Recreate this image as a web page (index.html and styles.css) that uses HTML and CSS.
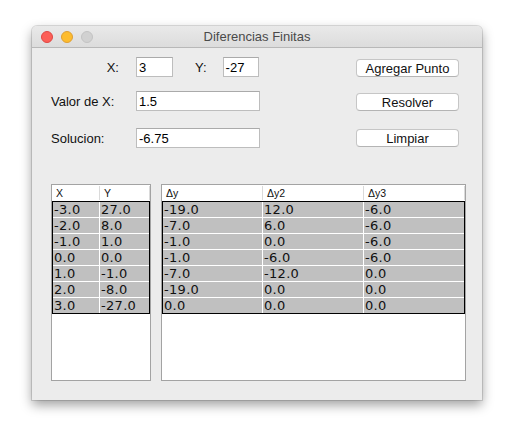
FILE: index.html
```html
<!DOCTYPE html>
<html>
<head>
<meta charset="utf-8">
<link rel="stylesheet" href="styles.css">
</head>
<body>
<div class="window">
  <div class="titlebar">
    <div class="lights">
      <span class="light red"></span>
      <span class="light yellow"></span>
      <span class="light gray"></span>
    </div>
    <div class="title">Diferencias Finitas</div>
    <div></div>
  </div>
  <div class="content">
    <div class="form">
      <div class="lbl lbl-x">X:</div>
      <div class="pair">
        <div class="field f-x">3</div>
        <span class="lbl-y">Y:</span>
        <div class="field f-y">-27</div>
      </div>
      <div class="btn">Agregar Punto</div>

      <div class="lbl">Valor de X:</div>
      <div class="pair"><div class="field f-wide">1.5</div></div>
      <div class="btn">Resolver</div>

      <div class="lbl">Solucion:</div>
      <div class="pair"><div class="field f-wide">-6.75</div></div>
      <div class="btn btn-last">Limpiar</div>
    </div>

    <div class="tables">
      <div class="table t-left">
        <div class="thead cols2">
          <div class="th">X</div><div class="th">Y</div>
        </div>
        <div class="tbody">
          <div class="td">-3.0</div><div class="td">27.0</div>
          <div class="td">-2.0</div><div class="td">8.0</div>
          <div class="td">-1.0</div><div class="td">1.0</div>
          <div class="td">0.0</div><div class="td">0.0</div>
          <div class="td">1.0</div><div class="td">-1.0</div>
          <div class="td">2.0</div><div class="td">-8.0</div>
          <div class="td">3.0</div><div class="td">-27.0</div>
        </div>
      </div>
      <div class="table t-right">
        <div class="thead cols3">
          <div class="th">Δy</div><div class="th">Δy2</div><div class="th">Δy3</div>
        </div>
        <div class="tbody">
          <div class="td">-19.0</div><div class="td">12.0</div><div class="td">-6.0</div>
          <div class="td">-7.0</div><div class="td">6.0</div><div class="td">-6.0</div>
          <div class="td">-1.0</div><div class="td">0.0</div><div class="td">-6.0</div>
          <div class="td">-1.0</div><div class="td">-6.0</div><div class="td">-6.0</div>
          <div class="td">-7.0</div><div class="td">-12.0</div><div class="td">0.0</div>
          <div class="td">-19.0</div><div class="td">0.0</div><div class="td">0.0</div>
          <div class="td">0.0</div><div class="td">0.0</div><div class="td">0.0</div>
        </div>
      </div>
    </div>
  </div>
</div>
</body>
</html>
```

FILE: styles.css
```css
* { box-sizing: border-box; }
html, body { margin: 0; padding: 0; background: #ffffff; }
body {
  padding: 26px 0 0 32px;
  min-height: 426px;
  font-family: "Liberation Sans", Arial, sans-serif;
  font-size: 13px;
  color: #111;
}
.window {
  width: 450px;
  height: 374px;
  background: #ececec;
  border-radius: 5px 5px 0 0;
  box-shadow: 0 0 0 1px rgba(0,0,0,0.12), 0 5px 12px rgba(0,0,0,0.38);
}
.titlebar {
  height: 22px;
  display: grid;
  grid-template-columns: 1fr auto 1fr;
  align-items: center;
  background: linear-gradient(#e9e9e9, #dcdcdc);
  border-bottom: 1px solid #b8b8b8;
  border-radius: 5px 5px 0 0;
}
.lights {
  display: flex;
  gap: 8px;
  padding-left: 9px;
  align-items: center;
}
.light {
  width: 12px;
  height: 12px;
  border-radius: 50%;
  display: block;
}
.red { background: #fc5f57; border: 1px solid #df4744; }
.yellow { background: #fdbc2e; border: 1px solid #de9f34; }
.gray { background: #d1d1d1; border: 1px solid #c3c3c3; }
.title {
  color: #4a4a4a;
  font-size: 13px;
}
.content {
  padding: 9px 16px 0 19px;
}
.form {
  display: grid;
  grid-template-columns: 85px 220px 103px;
  grid-template-rows: 34px 37px 20px;
  align-items: start;
}
.lbl {
  display: flex;
  align-items: center;
  height: 20px;
}
.lbl-x {
  justify-content: flex-end;
  padding-right: 17px;
}
.pair {
  display: flex;
  align-items: center;
}
.lbl-y { margin-left: 22px; margin-right: 16px; }
.field {
  height: 20px;
  background: #fff;
  border: 1px solid #bdbdbd;
  border-top-color: #aaaaaa;
  padding-left: 2px;
  display: flex;
  align-items: center;
  font-size: 13px;
  color: #000;
}
.f-x { width: 37px; }
.f-y { width: 36px; }
.f-wide { width: 124px; }
.btn {
  margin-top: 2px;
  height: 18px;
  background: #fff;
  border: 1px solid #c6c6c6;
  border-bottom-color: #b4b4b4;
  border-radius: 4px;
  display: flex;
  align-items: center;
  justify-content: center;
  color: #111;
  font-size: 13px;
}
.btn-last { margin-top: 1px; }
.tables {
  margin-top: 36px;
  display: flex;
  gap: 10px;
}
.table {
  height: 197px;
  background: #fff;
  border: 1px solid #a3a3a3;
}
.t-left { width: 100px; }
.t-right { width: 305px; }
.thead {
  height: 16px;
  display: grid;
  background: #fff;
}
.th {
  font-size: 10.5px;
  padding-left: 4px;
  display: flex;
  align-items: center;
  color: #111;
  border-right: 1px solid #dadada;
  margin: 1px 0;
}
.cols2 { grid-template-columns: 48px 1fr; }
.cols3 { grid-template-columns: 101px 101px 1fr; }
.tbody {
  display: grid;
  border: 1px solid #000;
  background: #fff;
  column-gap: 1px;
  row-gap: 1px;
  grid-auto-rows: 15px;
}
.t-left .tbody { grid-template-columns: 46px 1fr; }
.t-right .tbody { grid-template-columns: 99px 100px 1fr; }
.td {
  background: #c0c0c0;
  font-family: "DejaVu Sans", sans-serif;
  font-size: 13px;
  letter-spacing: 0.3px;
  line-height: 16px;
  padding-left: 1px;
  color: #111;
  white-space: nowrap;
  overflow: hidden;
}
```
